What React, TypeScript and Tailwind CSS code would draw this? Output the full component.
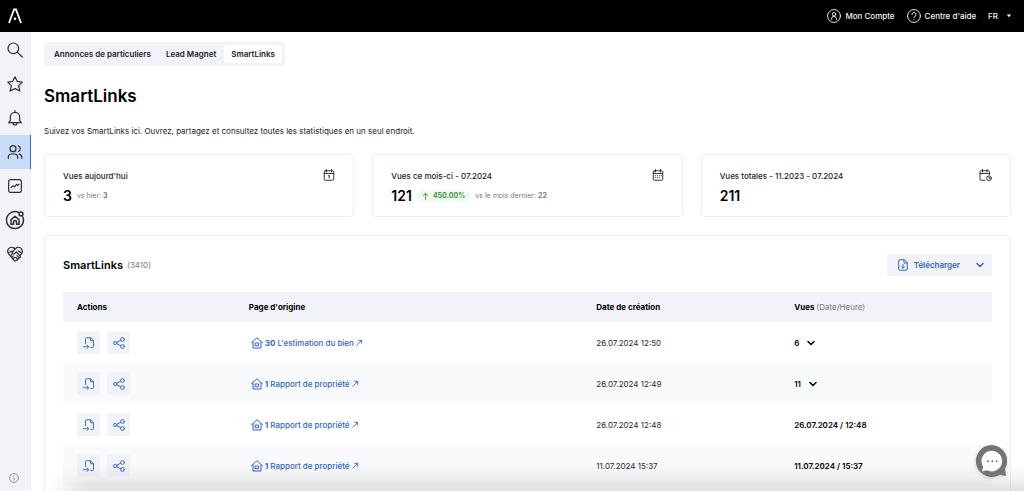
import type { ReactNode } from "react";

type IconProps = { className?: string; children?: ReactNode; box?: string; sw?: number };

function Icon({ className = "size-4", children, box = "0 0 24 24", sw = 1.8 }: IconProps) {
  return (
    <svg
      aria-hidden="true"
      viewBox={box}
      className={"shrink-0 " + className}
      fill="none"
      stroke="currentColor"
      strokeWidth={sw}
      strokeLinecap="round"
      strokeLinejoin="round"
    >
      {children}
    </svg>
  );
}

const navItems: { label: string; icon: ReactNode; active?: boolean }[] = [
  {
    label: "Recherche",
    icon: (
      <Icon className="size-4">
        <circle cx="9.5" cy="9.5" r="8" />
        <path d="M15.5 15.5 23 22.5" />
      </Icon>
    ),
  },
  {
    label: "Favoris",
    icon: (
      <Icon className="size-4">
        <path d="M12 1.2 15.3 8l7.5 1.1-5.4 5.3 1.9 8.1L12 18.9l-7.3 3.6 1.9-8.1L1.2 9.1 8.7 8z" />
      </Icon>
    ),
  },
  {
    label: "Notifications",
    icon: (
      <Icon className="size-4">
        <path d="M12 1v2M5 16V10.5a7 7 0 0 1 14 0V16l2.500 3h-19zM9 19.500a3 3 0 0 0 6 0" />
      </Icon>
    ),
  },
  {
    label: "Prospects",
    active: true,
    icon: (
      <Icon className="size-4">
        <circle cx="9" cy="7" r="4.5" />
        <path d="M17 2.8a4.5 4.5 0 0 1 0 8.4M2 21.5v-1.500a5 5 0 0 1 5-5h4a5 5 0 0 1 5 5v1.500M18.500 15.200a5 5 0 0 1 3.700 4.800v1.500" />
      </Icon>
    ),
  },
  {
    label: "Statistiques",
    icon: (
      <Icon className="size-4">
        <rect x="2.5" y="2.5" width="19" height="19" rx="2.5" />
        <path d="m6 14.5 3-3 2.5 1.5 3-3.500 1.500 1.500 2-1.500" />
      </Icon>
    ),
  },
  {
    label: "Biens",
    icon: (
      <Icon className="size-5">
        <path d="M16.300 2.900A10.200 10.200 0 1 0 21.400 8.300" />
        <circle cx="19.200" cy="4.800" r="2.300" />
        <path d="M7.200 11.500v5.500h3v-2.500a1.800 1.800 0 0 1 3.600 0v2.500h3v-5.500L12 7.500z" />
      </Icon>
    ),
  },
  {
    label: "Partenaires",
    icon: (
      <Icon className="size-4">
        <path d="M12 4.500C10 1.500 5.500 1 3 3.500s-2.500 6 0 9L11 22c.8.8 2 .6 2.500-.300M12 4.500c2-3 6.500-3.500 9-1s2.500 6 0 9l-1.500 1.800" />
        <path d="M12 4.500 8 9.500c-.8 2 1.800 3.300 3.300 1.800L14 9l6 6.300c1 1.500-.8 3-2.200 1.900M15 14.500l2.800 2.700c.9 1.500-.9 3-2.300 1.900M13 17l2.500 2.100c.5 1.500-.8 2.700-2 2.600M2.500 10l5-2.500M5 14.500l2-1.800M7 17l2.200-2M9.200 19.200l2-1.900M17 7.500l4.500 2.500" />
      </Icon>
    ),
  },
];

function CalendarBase() {
  return (
    <path d="M2.500 9h19M7 1v5M17 1v5M4.500 3.500h15a2 2 0 0 1 2 2v15a2 2 0 0 1-2 2h-15a2 2 0 0 1-2-2v-15a2 2 0 0 1 2-2z" />
  );
}

const stats: { label: string; value: string; growth?: string; compare?: string; previous?: string; icon: ReactNode }[] = [
  {
    label: "Vues aujourd'hui",
    value: "3",
    compare: "vs hier:",
    previous: "3",
    icon: (
      <Icon className="size-3">
        <CalendarBase />
        <path d="M11 13.500l1.500-.8v5.500" />
      </Icon>
    ),
  },
  {
    label: "Vues ce mois-ci - 07.2024",
    value: "121",
    growth: "450.00%",
    compare: "vs le mois dernier:",
    previous: "22",
    icon: (
      <Icon className="size-3">
        <CalendarBase />
        <path strokeDasharray="0.500 3.500" d="M6.500 13.500h13M6.500 17.500h9" />
      </Icon>
    ),
  },
  {
    label: "Vues totales - 11.2023 - 07.2024",
    value: "211",
    icon: (
      <Icon className="h-3 w-[13px]" box="0 0 26 24">
        <path d="M2 9h19M7 1v5M16 1v5M12 22.500H4a2 2 0 0 1-2-2v-15a2 2 0 0 1 2-2h15a2 2 0 0 1 2 2v6" />
        <circle cx="20" cy="18.500" r="4.800" />
        <path d="M20 16v2.700h2" />
      </Icon>
    ),
  },
];

const rows = [
  { count: "30", page: "L'estimation du bien", created: "26.07.2024 12:50", views: "6", expandable: true },
  { count: "1", page: "Rapport de propriété", created: "26.07.2024 12:49", views: "11", expandable: true },
  { count: "1", page: "Rapport de propriété", created: "26.07.2024 12:48", views: "26.07.2024 / 12:48", expandable: false },
  { count: "1", page: "Rapport de propriété", created: "11.07.2024 15:37", views: "11.07.2024 / 15:37", expandable: false },
];

function Chevron({ className }: { className: string }) {
  return (
    <Icon className={className} box="0 0 8 8" sw={1.5}>
      <path d="m1 2.500 3 3 3-3" />
    </Icon>
  );
}

function Header() {
  return (
    <header className="flex h-8 shrink-0 items-center justify-between bg-black pr-3 pl-2 text-white">
      <a href="#" aria-label="Accueil">
        <svg viewBox="0 0 14 16" className="h-4 w-[14px]" fill="none" stroke="white" strokeWidth="1.8">
          <path d="M1 15 6 1.500h2L13 15" />
          <circle cx="7" cy="10.8" r="1.300" fill="white" stroke="none" />
        </svg>
      </a>
      <nav className="flex items-center text-[8px] font-medium text-gray-100">
        <a href="#" className="flex items-center gap-1">
          <Icon className="size-[14px]" sw={1.6}>
            <circle cx="12" cy="12" r="11" />
            <circle cx="12" cy="9" r="3" />
            <path d="M8 18v-1.500a4 4 0 0 1 8 0V18" />
          </Icon>
          Mon Compte
        </a>
        <a href="#" className="ml-3 flex items-center gap-1">
          <Icon className="size-[14px]" sw={1.6}>
            <circle cx="12" cy="12" r="11" />
            <path d="M8.500 9.500a3.500 3.500 0 1 1 5 3.100c-1 .5-1.500 1-1.500 2.200M12 18v.2" />
          </Icon>
          Centre d'aide
        </a>
        <button type="button" className="ml-3 flex items-center gap-2">
          FR
          <svg aria-hidden="true" viewBox="0 0 6 4" className="h-1 w-[6px]" fill="currentColor">
            <path d="M.8.500h4.400L3 3.200z" />
          </svg>
        </button>
      </nav>
    </header>
  );
}

function Sidebar() {
  return (
    <aside className="flex w-[31px] shrink-0 flex-col bg-[#f2f3f8] pt-px text-[#2d2f36]">
      <nav className="flex flex-col">
        {navItems.map((item) => (
          <a
            key={item.label}
            href="#"
            aria-label={item.label}
            className={
              item.active
                ? "flex h-[34px] items-center justify-center border-r border-[#3868d0] bg-[#c9dcf7] pr-px"
                : "flex h-[34px] items-center justify-center pr-[2px]"
            }
          >
            {item.icon}
          </a>
        ))}
      </nav>
      <button type="button" aria-label="Informations" className="mt-auto mb-2 flex justify-center pr-1 text-[#6f7f9f]">
        <Icon className="size-[10px]" sw={2}>
          <circle cx="12" cy="12" r="10.5" />
          <path d="M12 11v6M12 7v.3" />
        </Icon>
      </button>
    </aside>
  );
}

function SmartLinksTable() {
  return (
    <table className="mt-4 w-full table-fixed text-left text-[8px]">
      <colgroup>
        <col className="w-[18.5%]" />
        <col className="w-[37.4%]" />
        <col className="w-[21.3%]" />
        <col />
      </colgroup>
      <thead>
        <tr className="h-[30px] bg-[#f2f3f8] text-black">
          <th className="px-[14px] font-bold">Actions</th>
          <th className="px-[14px] font-bold">Page d'origine</th>
          <th className="px-[14px] font-bold">Date de création</th>
          <th className="px-[14px] font-bold">
            Vues <span className="font-normal text-[#77777c]">(Date/Heure)</span>
          </th>
        </tr>
      </thead>
      <tbody>
        {rows.map((row) => (
          <tr key={row.created} className="h-[41px] even:bg-[#f9fafc]">
            <td className="px-[14px]">
              <div className="flex gap-[7px] text-[#3b6cc9]">
                <button type="button" aria-label="Ouvrir" className="flex size-[23px] items-center justify-center rounded-[2px] bg-[#f2f3f8]">
                  <Icon className="size-3" sw={2}>
                    <path d="M5 13V3.500a2 2 0 0 1 2-2h8l6 6V19a2 2 0 0 1-2 2h-3M15 1.500v6h6M1 19.500h10.500M8 16l3.500 3.500L8 23" />
                  </Icon>
                </button>
                <button type="button" aria-label="Partager" className="flex size-[23px] items-center justify-center rounded-[2px] bg-[#f2f3f8]">
                  <Icon className="size-3" sw={2}>
                    <circle cx="4.5" cy="12" r="3.3" />
                    <circle cx="19" cy="5" r="3.8" />
                    <circle cx="19" cy="19" r="3.8" />
                    <path d="m7.500 10.500 8-4M7.500 13.500l8 4" />
                  </Icon>
                </button>
              </div>
            </td>
            <td className="px-4">
              <a href="#" className="flex items-center gap-[2px] font-medium text-[#3365c4]">
                <Icon className="size-3" sw={2}>
                  <path d="M1 11.500 12 1.500l11 10M4 9.500V22h16V9.500" />
                  <rect x="9" y="12" width="6" height="5.5" />
                </Icon>
                <span className="font-bold">{row.count}</span>
                <span>{row.page}</span>
                <Icon className="size-[7px]" box="0 0 8 8" sw={1}>
                  <path d="M1 7 6.500 1.500M3 1.500h3.500V5" />
                </Icon>
              </a>
            </td>
            <td className="px-[14px] text-[#2a2a2e]">{row.created}</td>
            <td className="px-[14px] font-semibold text-black">
              {row.expandable ? (
                <button type="button" className="flex items-center gap-2">
                  {row.views}
                  <Chevron className="size-2" />
                </button>
              ) : (
                row.views
              )}
            </td>
          </tr>
        ))}
      </tbody>
    </table>
  );
}

export default function App() {
  return (
    <div className="flex h-screen flex-col bg-white font-['Inter','Liberation_Sans',sans-serif] text-[#222226]">
      <Header />
      <div className="flex min-h-0 flex-1">
        <Sidebar />
        <main className="min-w-0 flex-1 overflow-y-auto pt-[10px] pr-[13px] pb-4 pl-[13px] [scrollbar-width:none]">
          <nav className="flex w-fit rounded-[4px] bg-[#f2f3f8] p-[3px] text-[8px] leading-[18px] font-semibold">
            <a href="#" className="px-[7px]">Annonces de particuliers</a>
            <a href="#" className="px-2">Lead Magnet</a>
            <a href="#" aria-current="page" className="rounded-[3px] bg-white px-[7px]">SmartLinks</a>
          </nav>
          <h1 className="mt-[18px] text-[17px] leading-6 font-semibold text-black">SmartLinks</h1>
          <p className="mt-[17px] text-[8px] leading-[12px]">
            Suivez vos SmartLinks ici. Ouvrez, partagez et consultez toutes les statistiques en un seul endroit.
          </p>

          <section className="mt-[17px] grid grid-cols-3 gap-[18px]">
            {stats.map((stat) => (
              <article key={stat.label} className="flex h-[63px] items-start justify-between rounded-[4px] border border-[#efeff2] px-[18px] pt-[14px]">
                <div>
                  <h2 className="text-[8px] leading-[14px] font-medium">{stat.label}</h2>
                  <div className="mt-1 flex items-center text-[7px] leading-[18px] text-[#77777c]">
                    <strong className="text-sm leading-[18px] font-semibold text-black">{stat.value}</strong>
                    {stat.growth && (
                      <span className="ml-[5px] flex items-center gap-1 rounded-full bg-[#effbf0] px-[5px] leading-3 font-bold text-[#3f9340]">
                        <Icon className="size-[7px]" box="0 0 8 8" sw={1}>
                          <path d="M4 7.500V.500M1.500 3 4 .500 6.500 3" />
                        </Icon>
                        {stat.growth}
                      </span>
                    )}
                    {stat.compare && (
                      <span className="ml-[5px]">
                        {stat.compare} <b className="font-bold">{stat.previous}</b>
                      </span>
                    )}
                  </div>
                </div>
                {stat.icon}
              </article>
            ))}
          </section>

          <section className="mt-[18px] rounded-[4px] border border-[#efeff2] p-[18px]">
            <div className="flex items-center justify-between">
              <h2 className="flex items-center gap-1 text-[11px] font-semibold text-black">
                SmartLinks <span className="text-[8px] font-normal text-[#77777c]">(3410)</span>
              </h2>
              <div className="flex h-[22px] items-center rounded-[2px] bg-[#f2f3f8] text-[8px] font-semibold text-[#3365c4]">
                <button type="button" className="flex items-center gap-[5px] pr-2 pl-[10px]">
                  <Icon className="size-3" sw={2}>
                    <path d="M14 1.500H6A2.500 2.500 0 0 0 3.500 4v16A2.500 2.500 0 0 0 6 22.500h12a2.500 2.500 0 0 0 2.500-2.500V8zM14 1.500V8h6.500M12 11v7M9 15.500l3 3 3-3" />
                  </Icon>
                  Télécharger
                </button>
                <button type="button" aria-label="Autres formats" className="px-2">
                  <Chevron className="size-2" />
                </button>
              </div>
            </div>
            <SmartLinksTable />
          </section>
        </main>
      </div>
      <div className="pointer-events-none fixed right-0 bottom-0 left-12 h-7 bg-linear-to-t from-black/12 via-black/4 to-transparent [mask-image:linear-gradient(to_right,transparent,black_40px)]" />
      <button type="button" aria-label="Ouvrir le chat" className="fixed right-[15px] bottom-[13px] drop-shadow-sm">
        <svg viewBox="0 0 34 34" className="size-[34px]">
          <path d="M17 1a16 16 0 1 0 8 29.800L31 32l-1-7A16 16 0 0 0 17 1z" fill="#747474" />
          <path d="M17 6.800A10.300 10.300 0 1 1 12 26.200l-5 1.300 1.200-4.800A10.300 10.300 0 0 1 17 6.800z" fill="white" />
          <g fill="#747474">
            <circle cx="13" cy="17.300" r="1" />
            <circle cx="17.300" cy="17.300" r="1" />
            <circle cx="21.600" cy="17.300" r="1" />
          </g>
        </svg>
      </button>
    </div>
  );
}
